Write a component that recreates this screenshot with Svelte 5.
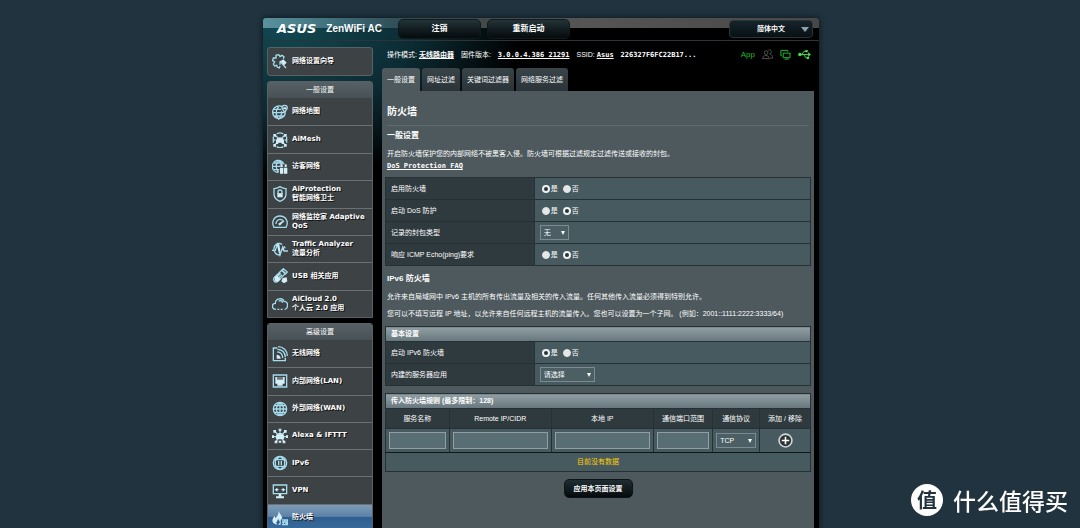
<script lang="ts">
    type MenuEntry = {
        lines: string[];
        icon: string;
        active?: boolean;
    };

    // outlines are stroked, solids are filled, both on a 24x24 grid
    const icons: Record<string, {line: string; fill?: string}> = {
        wizard: {
            line: "M12 18l-1 3-3-1-1-3-3 1-2-3 2-3-3-2 1-4 4 0 0-4 4-1 2 3 3-2 3 2-1 3M12 11l9 10M12 11l0 5M12 11l5 0",
            fill: "M13 11l4-3 5 5-4 4z"
        },
        map: {
            line: "M15 4A9.500 9.500 0 1 0 20 13M2 13h18M3 8h11M4 18h15M10 4c-5 5-5 13 0 19c5-5 5-9 4-12M19 13l-4-7a4 4 0 1 1 8 0z",
            fill: "M17 5h4v3h-4z"
        },
        mesh: {
            line: "M5 5l4 4M19 5l-4 4M4 19l4-3M20 19l-4-3M1 12h4M19 12h4M7 3c3-2 7-2 10 0M7 22c3 2 7 2 10 0M2 7l0 9M22 7l0 9",
            fill: "M6 18v-5c0-7 12-7 12 0v5h-3l-1-2h-4l-1 2zM2 3h4v4H2zM18 3h4v4h-4zM2 18h4v4H2zM18 18h4v4h-4z"
        },
        guest: {
            line: "M18 8A9 9 0 1 0 10 20M1 11h12M3 6h14M3 16h8M10 2c-5 5-5 13 0 18M10 2c3 2 4 5 4 8",
            fill: "M12 13h5v9h-5zM18 13h5v9h-5zM13 8h3v4h-3zM19 8h3v4h-3z"
        },
        shield: {
            line: "M12 1c3 2 6 3 9 3v8c0 6-4 9-9 11c-5-2-9-5-9-11V4c3 0 6-1 9-3zM9 12V9c0-4 6-4 6 0v3",
            fill: "M8 11h8v6H8z"
        },
        gauge: {
            line: "M3 20C-2 11 4 3 12 3s14 8 9 17zM6 15c0-4 3-7 6-7s5 2 6 4M11 17l6-6",
            fill: "M9 15l7-5-4 7z"
        },
        traffic: {
            line: "M15 5C9 1 2 6 3 13c1 5 4 8 8 8M0 14h5l3-9 4 16 4-12 2 6h6M18 8l2 3",
            fill: "M8 4l3 1 2 13-3-3zM15 14l2-5 1 5z"
        },
        usb: {
            line: "M15 3l5 5L9 20c-4 3-8-1-6-5zM17 1l6 5-3 3-5-5zM6 15l7-7M8 17l7-7",
            fill: "M4 14l3-3 6 6-5 4-4-2zM16 15l6-1 1 6-5 3-4-3z"
        },
        cloud: {
            line: "M6 20c-7 0-7-9-1-9c0-8 11-9 13-3c7 0 7 11 1 12M8 20h3M13 20h3M10 8c2-2 5-1 6 2"
        },
        wireless: {
            line: "M8 3H2v19h18v-4M8 9c5 0 8 4 8 9M8 5c7 0 12 5 12 12M9 1c8 0 14 6 14 14",
            fill: "M7 13c3 0 6 2 6 6H7z"
        },
        lan: {
            line: "M2 3h20v18H2z",
            fill: "M5 6h3v4h2V6h1v4h2V6h1v4h2V6h3v10h-3v3H8v-3H5z"
        },
        globe: {
            line: "M12 2a10 10 0 1 0 0 20a10 10 0 1 0 0-20M2 12h20M4 7h16M4 17h16M12 2v20M12 2c-7 5-7 15 0 20M12 2c7 5 7 15 0 20"
        },
        alexa: {
            line: "M12 3v4M4 5l4 4M20 5l-4 4M1 13h5M18 13h5M6 20l3-3M18 20l-3-3",
            fill: "M6 17v-5c0-6 12-6 12 0v5zM10 1h4v3h-4zM2 3h4v4H2zM18 3h4v4h-4zM0 11h3v4H0zM21 11h3v4h-3zM4 19h4v4H4zM16 19h4v4h-4zM10 19h4v3h-4z"
        },
        ipv6: {
            line: "M12 2a10 10 0 1 0 0 20a10 10 0 1 0 0-20M3 7h18M3 17h18M12 2c-5 3-6 5-7 7M12 2c5 3 6 5 7 7M12 22c-5-3-6-5-7-7M12 22c5-3 6-5 7-7M5 9v6M10 9v6M14 9v6M19 9v6"
        },
        vpn: {
            line: "M2 3h20v13H2zM6 10h4M14 10h4",
            fill: "M4 10l4-3v6zM20 10l-4-3v6zM10 16h4v4h4v3H6v-3h4z"
        },
        firewall: {
            line: "M15 15h8v7h-8M15 18h8M19 15v3M17 18v4M21 18v4",
            fill: "M10 1c1 5 6 7 5 12l-2 2v7H9c5-3 2-6 0-9c0 4-5 5-1 9C-1 21-1 14 4 9l1 3C9 9 10 5 10 1z"
        }
    };

    const general: MenuEntry[] = [
        {lines: ["网络地图"], icon: "map"},
        {lines: ["AiMesh"], icon: "mesh"},
        {lines: ["访客网络"], icon: "guest"},
        {lines: ["AiProtection", "智能网络卫士"], icon: "shield"},
        {lines: ["网络监控家 Adaptive", "QoS"], icon: "gauge"},
        {lines: ["Traffic Analyzer", "流量分析"], icon: "traffic"},
        {lines: ["USB 相关应用"], icon: "usb"},
        {lines: ["AiCloud 2.0", "个人云 2.0 应用"], icon: "cloud"}
    ];

    const advanced: MenuEntry[] = [
        {lines: ["无线网络"], icon: "wireless"},
        {lines: ["内部网络(LAN)"], icon: "lan"},
        {lines: ["外部网络(WAN)"], icon: "globe"},
        {lines: ["Alexa & IFTTT"], icon: "alexa"},
        {lines: ["IPv6"], icon: "ipv6"},
        {lines: ["VPN"], icon: "vpn"},
        {lines: ["防火墙"], icon: "firewall", active: true}
    ];

    const tabs = ["一般设置", "网址过滤", "关键词过滤器", "网络服务过滤"];

    let currentTab = $state(0);
    let firewall = $state("是");
    let dos = $state("否");
    let ping = $state("否");
    let ipv6 = $state("是");
</script>

{#snippet entry(item: MenuEntry)}
    <a class="entry" class:active={item.active} href="#{item.icon}">
        <svg viewBox="0 0 24 24" aria-hidden="true">
            <path class="line" d={icons[item.icon].line} />
            {#if icons[item.icon].fill}
                <path class="solid" d={icons[item.icon].fill} />
            {/if}
        </svg>
        <span>
            {#each item.lines as line}
                <span class="row">{line}</span>
            {/each}
        </span>
    </a>
{/snippet}

{#snippet yesNo(name: string, value: string, set: (v: string) => void)}
    <div class="radios">
        {#each ["是", "否"] as option}
            <label>
                <input type="radio" {name} checked={value === option} onchange={() => set(option)}>{option}
            </label>
        {/each}
    </div>
{/snippet}

<div class="page">
    <div class="shell">
        <header>
            <div class="brand">
                <span class="logo">ASUS</span>
                <span class="model">ZenWiFi AC</span>
            </div>
            <button class="top">注销</button>
            <button class="top">重新启动</button>
            <div class="pick language">
                <select aria-label="语言">
                    <option>简体中文</option>
                </select>
            </div>
        </header>

        <div class="columns">
            <nav>
                <div class="group wizard">
                    {@render entry({lines: ["网络设置向导"], icon: "wizard"})}
                </div>
                <div class="group">
                    <h2>一般设置</h2>
                    <ul class="general">
                        {#each general as item}
                            <li>{@render entry(item)}</li>
                        {/each}
                    </ul>
                </div>
                <div class="group">
                    <h2>高级设置</h2>
                    <ul class="advanced">
                        {#each advanced as item}
                            <li>{@render entry(item)}</li>
                        {/each}
                    </ul>
                </div>
            </nav>

            <main>
                <div class="status">
                    <span>操作模式: <a href="#mode">无线路由器</a></span>
                    <span>固件版本:</span>
                    <a class="mono" href="#firmware">3.0.0.4.386_21291</a>
                    <span>SSID: <a class="mono" href="#ssid">Asus</a></span>
                    <b class="mono ssid">226327F6FC22B17...</b>
                    <div class="tray">
                        <a class="app" href="#app-link">App</a>
                        <svg class="users" viewBox="0 0 24 24" aria-hidden="true">
                            <path d="M9 4a4 4 0 1 0 0 8a4 4 0 1 0 0-8M1 21c0-9 15-9 15 0zM13 4c3-5 9-1 7 4l-3 3c5 1 6 4 6 9h-5" />
                        </svg>
                        <svg class="screens" viewBox="0 0 24 24" aria-hidden="true">
                            <path d="M7 9h15v10H7zM10 22h9M4 15H2V3h15v3" />
                        </svg>
                        <svg class="plug" viewBox="0 0 28 24" aria-hidden="true">
                            <path class="line" d="M4 12h20M8 12l5-7h5M12 12l5 7h4" />
                            <path class="solid" d="M0 12a4 4 0 1 1 8 0a4 4 0 1 1-8 0M22 7l6 5-6 5zM16 2h5v5h-5zM19 17h5v5h-5z" />
                        </svg>
                    </div>
                </div>

                <div class="tabs">
                    {#each tabs as tab, i}
                        <button class:current={currentTab === i} onclick={() => (currentTab = i)}>{tab}</button>
                    {/each}
                </div>

                <div class="panel">
                    <h1>防火墙</h1>
                    <h3>一般设置</h3>
                    <p>
                        开启防火墙保护您的内部网络不被黑客入侵。防火墙可根据过滤规定过滤传送或接收的封包。<br>
                        <a class="mono" href="#faq">DoS Protection FAQ</a>
                    </p>
                    <table class="form">
                        <colgroup>
                            <col class="c35"><col>
                        </colgroup>
                        <tbody>
                            <tr>
                                <th scope="row">启用防火墙</th>
                                <td>{@render yesNo("firewall", firewall, (v) => (firewall = v))}</td>
                            </tr>
                            <tr>
                                <th scope="row">启动 DoS 防护</th>
                                <td>{@render yesNo("dos", dos, (v) => (dos = v))}</td>
                            </tr>
                            <tr>
                                <th scope="row"><label for="log">记录的封包类型</label></th>
                                <td>
                                    <div class="pick short">
                                        <select id="log">
                                            <option>无</option>
                                        </select>
                                    </div>
                                </td>
                            </tr>
                            <tr>
                                <th scope="row">响应 ICMP Echo(ping)要求</th>
                                <td>{@render yesNo("ping", ping, (v) => (ping = v))}</td>
                            </tr>
                        </tbody>
                    </table>

                    <h3>IPv6 防火墙</h3>
                    <p>允许来自局域网中 IPv6 主机的所有传出流量及相关的传入流量。任何其他传入流量必须得到特别允许。</p>
                    <p>您可以不填写远程 IP 地址，以允许来自任何远程主机的流量传入。您也可以设置为一个子网。 (例如：2001::1111:2222:3333/64)</p>
                    <table class="form">
                        <colgroup>
                            <col class="c35"><col>
                        </colgroup>
                        <thead>
                            <tr><th class="bar" colspan="2">基本设置</th></tr>
                        </thead>
                        <tbody>
                            <tr>
                                <th scope="row">启动 IPv6 防火墙</th>
                                <td>{@render yesNo("ipv6", ipv6, (v) => (ipv6 = v))}</td>
                            </tr>
                            <tr>
                                <th scope="row"><label for="server">内建的服务器应用</label></th>
                                <td>
                                    <div class="pick long">
                                        <select id="server">
                                            <option>请选择</option>
                                        </select>
                                    </div>
                                </td>
                            </tr>
                        </tbody>
                    </table>

                    <table class="rules">
                        <colgroup>
                            <col class="c15"><col class="c24"><col class="c24"><col class="c14"><col class="c11"><col class="c12">
                        </colgroup>
                        <thead>
                            <tr><th class="bar" colspan="6">传入防火墙规则 (最多限制：128)</th></tr>
                            <tr class="names">
                                <th>服务名称</th>
                                <th>Remote IP/CIDR</th>
                                <th>本地 IP</th>
                                <th>通信端口范围</th>
                                <th>通信协议</th>
                                <th>添加 / 移除</th>
                            </tr>
                        </thead>
                        <tbody>
                            <tr class="inputs">
                                <td><input type="text" aria-label="服务名称"></td>
                                <td><input type="text" aria-label="Remote IP/CIDR"></td>
                                <td><input type="text" aria-label="本地 IP"></td>
                                <td><input type="text" aria-label="通信端口范围"></td>
                                <td>
                                    <div class="pick">
                                        <select aria-label="通信协议">
                                            <option>TCP</option>
                                        </select>
                                    </div>
                                </td>
                                <td>
                                    <button class="add" aria-label="添加">
                                        <svg viewBox="0 0 28 28" aria-hidden="true">
                                            <circle cx="14" cy="14" r="12" />
                                            <path d="M14 7v14M7 14h14" />
                                        </svg>
                                    </button>
                                </td>
                            </tr>
                            <tr class="empty"><td colspan="6">目前没有数据</td></tr>
                        </tbody>
                    </table>

                    <button class="apply">应用本页面设置</button>
                </div>
            </main>
        </div>
    </div>

    <div class="watermark">
        <span class="seal">值</span>
        <span>什么值得买</span>
    </div>
</div>

<style>
    :global(body) {
        background: #21333e;
    }

    .page {
        box-sizing: border-box;
        height: 100vh;
        overflow: hidden;
        padding: 18px 10px 0 12px;
        font: 7px/12px "Liberation Sans", "Noto Sans CJK SC", sans-serif;
        color: #fff;
        background: #21333e;
    }

    h1, h2, h3, p, ul {
        margin: 0;
        padding: 0;
    }

    li {
        list-style: none;
    }

    a {
        color: inherit;
    }

    button, select, input {
        box-sizing: border-box;
        font: inherit;
        color: inherit;
        margin: 0;
    }

    .shell {
        max-width: 556px;
        min-height: 100%;
        margin: 0 auto;
        border-radius: 3px 3px 0 0;
        background:
            radial-gradient(ellipse 240px 150px at 20px 10px, #124852 0%, #0c2b33 55%, transparent 100%),
            #000;
        box-shadow: 0 0 6px #0b151b;
    }

    header {
        display: flex;
        align-items: center;
        gap: 6px;
        height: 22px;
        padding: 0 6px 0 14px;
        border-bottom: 1px solid #2b3437;
        border-radius: 3px 3px 0 0;
        background: linear-gradient(90deg, #5a929d 0, #3b6a75 80px, #315059 130px, #434848 220px, #555 320px, #484848 100%) top / 100% 10px no-repeat;
    }

    .brand {
        display: flex;
        align-items: center;
        gap: 10px;
        width: 115px;
        white-space: nowrap;
    }

    .logo {
        font: italic bold 13px/14px "DejaVu Sans", sans-serif;
    }

    .model {
        font-size: 10px;
        font-weight: bold;
    }

    .top {
        width: 83px;
        height: 20px;
        border: 1px solid #10191c;
        border-radius: 5px;
        background: linear-gradient(#233438, #10191c 60%, #060b0d);
        font-weight: bold;
        font-size: 8px;
    }

    .language {
        width: 84px;
        margin-left: auto;
    }

    .pick.language select {
        height: 18px;
        border: 1px solid #26363b;
        border-radius: 4px;
        background: linear-gradient(#16242a, #081014);
        font-weight: bold;
        text-align-last: center;
    }

    .pick.language::after {
        border-width: 5px 4px 0;
        border-top-color: #8ba3b0;
    }

    .columns {
        display: grid;
        grid-template-columns: 106px minmax(0, 1fr);
        gap: 9px;
        padding: 0 5px 0 4px;
    }

    nav {
        display: flex;
        flex-direction: column;
        gap: 5px;
        padding-top: 6px;
        font-family: "DejaVu Sans", "Noto Sans CJK SC", sans-serif;
    }

    .group {
        border: 1px solid #596164;
        border-radius: 3px 3px 0 0;
        background: #3d4345;
        overflow: hidden;
    }

    .wizard {
        display: grid;
        height: 27px;
        border-radius: 3px;
    }

    h2 {
        height: 16px;
        background: linear-gradient(#576165, #485155);
        font-size: 7px;
        font-weight: normal;
        line-height: 16px;
        text-align: center;
    }

    nav ul {
        display: grid;
        grid-auto-rows: 1fr;
    }

    .general {
        min-height: 219px;
    }

    .advanced {
        min-height: 191px;
    }

    li {
        display: grid;
    }

    li + li {
        border-top: 1px solid #6a7073;
    }

    .entry {
        display: flex;
        align-items: center;
        gap: 4px;
        padding-left: 4px;
        font-weight: bold;
        line-height: 9px;
        text-decoration: none;
        text-shadow: 1px 1px 0 #111;
        white-space: nowrap;
    }

    .entry svg {
        flex: none;
        width: 16px;
        height: 16px;
    }

    .row {
        display: block;
    }

    .line {
        fill: none;
        stroke: #a5dbed;
        stroke-width: 2;
    }

    .solid {
        fill: #d4eef7;
    }

    .active {
        background: linear-gradient(#7d9bb8 0, #5d82a6 44%, #2f5f90 46%, #3a6c9c);
    }

    .status {
        display: flex;
        align-items: center;
        gap: 7px;
        height: 27px;
        padding: 0 3px 0 5px;
        white-space: nowrap;
    }

    .status a {
        font-weight: bold;
    }

    .mono {
        font-family: "DejaVu Sans Mono", monospace;
        font-weight: bold;
    }

    .tray {
        display: flex;
        align-items: center;
        gap: 7px;
        margin-left: auto;
    }

    .tray .app {
        color: #1fb82c;
        font-size: 8px;
        font-weight: normal;
        text-decoration: none;
    }

    .tray svg {
        width: 11px;
        height: 11px;
        fill: none;
        stroke-width: 2;
    }

    .users {
        stroke: #585858;
    }

    .screens {
        stroke: #25c832;
    }

    .tray .plug {
        width: 13px;
    }

    .plug .line {
        stroke: #44e04c;
    }

    .plug .solid {
        fill: #44e04c;
    }

    .tabs {
        display: flex;
        gap: 2px;
    }

    .tabs button {
        height: 23px;
        padding: 0 5px;
        border: 0;
        border-radius: 3px 3px 0 0;
        background: linear-gradient(#394449, #2a3438);
    }

    .tabs .current {
        background: #4d595d;
    }

    .panel {
        min-height: 438px;
        box-sizing: border-box;
        padding: 14px 3px 0;
        background: #4d595d;
    }

    h1 {
        margin: 0 2px 4px;
        padding-bottom: 6px;
        border-bottom: 1px solid #5f6a6e;
        font-size: 10px;
        font-weight: bold;
        line-height: 14px;
    }

    h3 {
        padding-left: 2px;
        font-size: 8px;
        line-height: 12px;
    }

    p {
        margin: 6px 0 5px;
        padding-left: 2px;
    }

    p + p {
        margin-top: 5px;
        margin-bottom: 6px;
    }

    table {
        width: 100%;
        margin-bottom: 7px;
        border-collapse: collapse;
        table-layout: fixed;
    }

    th, td {
        padding: 0 5px;
        border: 1px solid #263136;
        background: #475a5f;
        font-weight: normal;
        text-align: left;
    }

    th {
        background: #2f3a3e;
    }

    .form tbody tr {
        height: 22px;
    }

    .bar {
        height: 15px;
        box-sizing: border-box;
        background: linear-gradient(#919fa4, #67767c);
        font-weight: bold;
    }

    .radios {
        display: flex;
        gap: 5px;
        padding-left: 2px;
    }

    .radios label {
        display: flex;
        align-items: center;
        gap: 1px;
    }

    .radios input {
        appearance: none;
        width: 8px;
        height: 8px;
        border: 1px solid #dfe3e4;
        border-radius: 50%;
        background: #e6e6e6;
    }

    .radios input:checked {
        border: 2px solid #f0f0f0;
        background: #27343a;
    }

    .pick {
        position: relative;
    }

    .pick select {
        appearance: none;
        display: block;
        width: 100%;
        height: 15px;
        padding: 0 3px;
        border: 1px solid #7b8b90;
        border-radius: 0;
        background: #4b5f65;
        line-height: 12px;
    }

    .pick::after {
        content: "";
        position: absolute;
        top: 50%;
        right: 4px;
        margin-top: -2px;
        border: solid transparent;
        border-width: 4px 2px 0;
        border-top-color: #fff;
        pointer-events: none;
    }

    .short {
        width: 29px;
    }

    .long {
        width: 55px;
    }

    .c35 {
        width: 35%;
    }

    .c15 {
        width: 15%;
    }

    .c24 {
        width: 24%;
    }

    .c14 {
        width: 14%;
    }

    .c11 {
        width: 11%;
    }

    .c12 {
        width: 12%;
    }

    .names {
        height: 20px;
    }

    .names th {
        padding: 0;
        text-align: center;
    }

    .inputs {
        height: 24px;
    }

    .inputs td {
        padding: 0 3px;
        border-bottom-color: #101719;
    }

    .inputs input {
        display: block;
        width: 100%;
        height: 17px;
        border: 1px solid #929ea1;
        background: #596e74;
    }

    .add {
        display: block;
        width: 15px;
        height: 15px;
        margin: 0 auto;
        padding: 0;
        border: 0;
        background: none;
    }

    .add svg {
        display: block;
    }

    .add circle {
        fill: #2b3337;
        stroke: #d4d6d7;
        stroke-width: 3;
    }

    .add path {
        stroke: #fff;
        stroke-width: 3;
    }

    .empty {
        height: 19px;
    }

    .empty td {
        color: #fc0;
        text-align: center;
    }

    .apply {
        display: block;
        height: 19px;
        margin: 0 auto;
        padding: 0 9px;
        border: 1px solid #0c1417;
        border-radius: 5px;
        background: linear-gradient(#1f2d32, #060b0d);
        font-weight: bold;
    }

    .watermark {
        position: fixed;
        right: 12px;
        bottom: 12px;
        display: flex;
        align-items: center;
        gap: 10px;
        font: 500 23px/32px "Noto Sans CJK SC", sans-serif;
    }

    .seal {
        width: 32px;
        border-radius: 50%;
        background: #fff;
        color: #21333e;
        font-weight: bold;
        font-size: 20px;
        text-align: center;
    }
</style>
